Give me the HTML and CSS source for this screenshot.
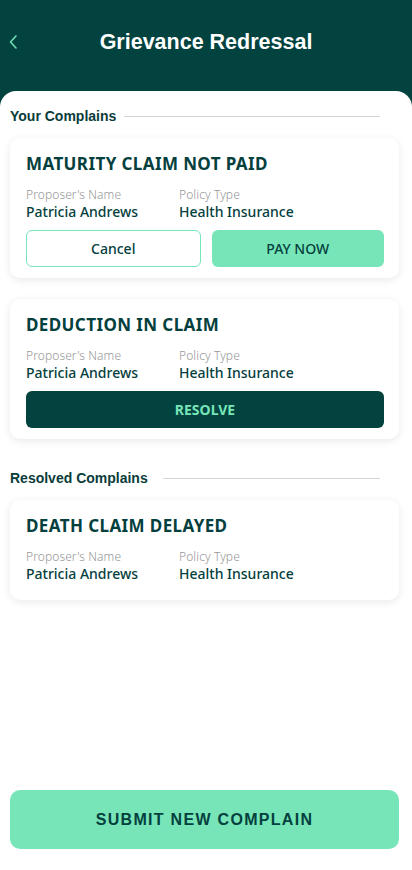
FILE: index.html
```html
<!DOCTYPE html>
<html lang="en">
<head>
<meta charset="utf-8">
<title>Grievance Redressal</title>
<link rel="stylesheet" href="styles.css">
</head>
<body>
<div class="app">
  <header class="topbar">
    <button class="back" aria-label="Back">
      <svg width="8" height="14" viewBox="0 0 8 14"><path d="M7 1 L1.5 7 L7 13" fill="none" stroke="#6fe0b2" stroke-width="1.6" stroke-linecap="round" stroke-linejoin="round"/></svg>
    </button>
    <h1 class="title">Grievance Redressal</h1>
  </header>
  <main class="panel">
    <div class="section-head"><span>Your Complains</span><i class="rule"></i></div>

    <div class="card">
      <h2 class="card-title">MATURITY CLAIM NOT PAID</h2>
      <div class="info">
        <div class="col"><div class="label">Proposer's Name</div><div class="value">Patricia Andrews</div></div>
        <div class="col"><div class="label">Policy Type</div><div class="value">Health Insurance</div></div>
      </div>
      <div class="actions">
        <button class="btn btn-outline">Cancel</button>
        <button class="btn btn-mint">PAY NOW</button>
      </div>
    </div>

    <div class="card">
      <h2 class="card-title">DEDUCTION IN CLAIM</h2>
      <div class="info">
        <div class="col"><div class="label">Proposer's Name</div><div class="value">Patricia Andrews</div></div>
        <div class="col"><div class="label">Policy Type</div><div class="value">Health Insurance</div></div>
      </div>
      <div class="actions">
        <button class="btn btn-dark">RESOLVE</button>
      </div>
    </div>

    <div class="section-head section-gap"><span>Resolved Complains</span><i class="rule rule-wide"></i></div>

    <div class="card card-plain">
      <h2 class="card-title">DEATH CLAIM DELAYED</h2>
      <div class="info">
        <div class="col"><div class="label">Proposer's Name</div><div class="value">Patricia Andrews</div></div>
        <div class="col"><div class="label">Policy Type</div><div class="value">Health Insurance</div></div>
      </div>
    </div>

    <button class="submit">SUBMIT NEW COMPLAIN</button>
  </main>
</div>
</body>
</html>
```
FILE: styles.css
```css
* { box-sizing: border-box; }
html, body { margin: 0; padding: 0; }
body {
  background: #02423f;
  font-family: "Noto Sans", "Open Sans", sans-serif;
  color: #04403d;
}
.app {
  min-height: 870px;
  display: flex;
  flex-direction: column;
}
.topbar {
  height: 91px;
  display: flex;
  align-items: flex-start;
  justify-content: center;
  padding-top: 29px;
  position: relative;
}
.back {
  position: absolute;
  left: 9px;
  top: 35px;
  background: none;
  border: 0;
  padding: 0;
  width: 10px;
  height: 14px;
  display: flex;
}
.title {
  margin: 0;
  font-family: "Liberation Sans", Arial, sans-serif;
  font-weight: 700;
  font-size: 21.5px;
  line-height: 26px;
  color: #ffffff;
}
.panel {
  flex: 1;
  background: #ffffff;
  border-radius: 16px 16px 0 0;
  padding-top: 17px;
  display: flex;
  flex-direction: column;
}
.section-head {
  display: flex;
  align-items: center;
  padding: 0 32px 0 10px;
  font-family: "Liberation Sans", Arial, sans-serif;
  font-weight: 700;
  font-size: 14px;
  line-height: 16px;
  color: #0a3c3a;
}
.section-gap { margin-top: 31px; }
.rule {
  flex: 1;
  height: 1px;
  background: #cfd6d5;
  margin-left: 8px;
}
.rule-wide { margin-left: 15px; }
.section-head + .card { margin-top: 14px; }
.card {
  margin: 21px 13px 0 10px;
  background: #fff;
  border-radius: 10px;
  box-shadow: 0 2px 9px rgba(0, 0, 0, 0.09);
  padding: 15px 15px 11px 16px;
}
.card-plain { padding-bottom: 17px; }
.card-title {
  margin: 0;
  font-size: 17px;
  line-height: 22px;
  font-weight: 700;
  letter-spacing: 0.4px;
  color: #04403d;
}
.info {
  display: flex;
  margin-top: 12px;
}
.col:first-child { width: 153px; }
.label {
  font-size: 12px;
  line-height: 16px;
  color: #969696;
  font-weight: 300;
  letter-spacing: 0.1px;
}
.value {
  font-size: 14px;
  line-height: 18px;
  font-weight: 500;
  color: #04403d;
}
.actions {
  display: flex;
  gap: 11px;
  margin-top: 9px;
}
.btn {
  flex: 1;
  height: 37px;
  border-radius: 6px;
  font-family: "Noto Sans", sans-serif;
  font-size: 14px;
  font-weight: 500;
  color: #04403d;
  border: 0;
  padding: 0;
}
.btn-outline {
  background: #fff;
  border: 1px solid #77e5b8;
}
.btn-mint { background: #77e5b8; }
.btn-dark {
  background: #02423f;
  color: #77e5b8;
  font-weight: 700;
  font-size: 14px;
}
.submit {
  margin: auto 13px 21px 10px;
  height: 59px;
  border: 0;
  border-radius: 10px;
  background: #77e5b8;
  color: #04403d;
  font-family: "Liberation Sans", Arial, sans-serif;
  font-weight: 700;
  font-size: 16px;
  letter-spacing: 1.3px;
}
```
